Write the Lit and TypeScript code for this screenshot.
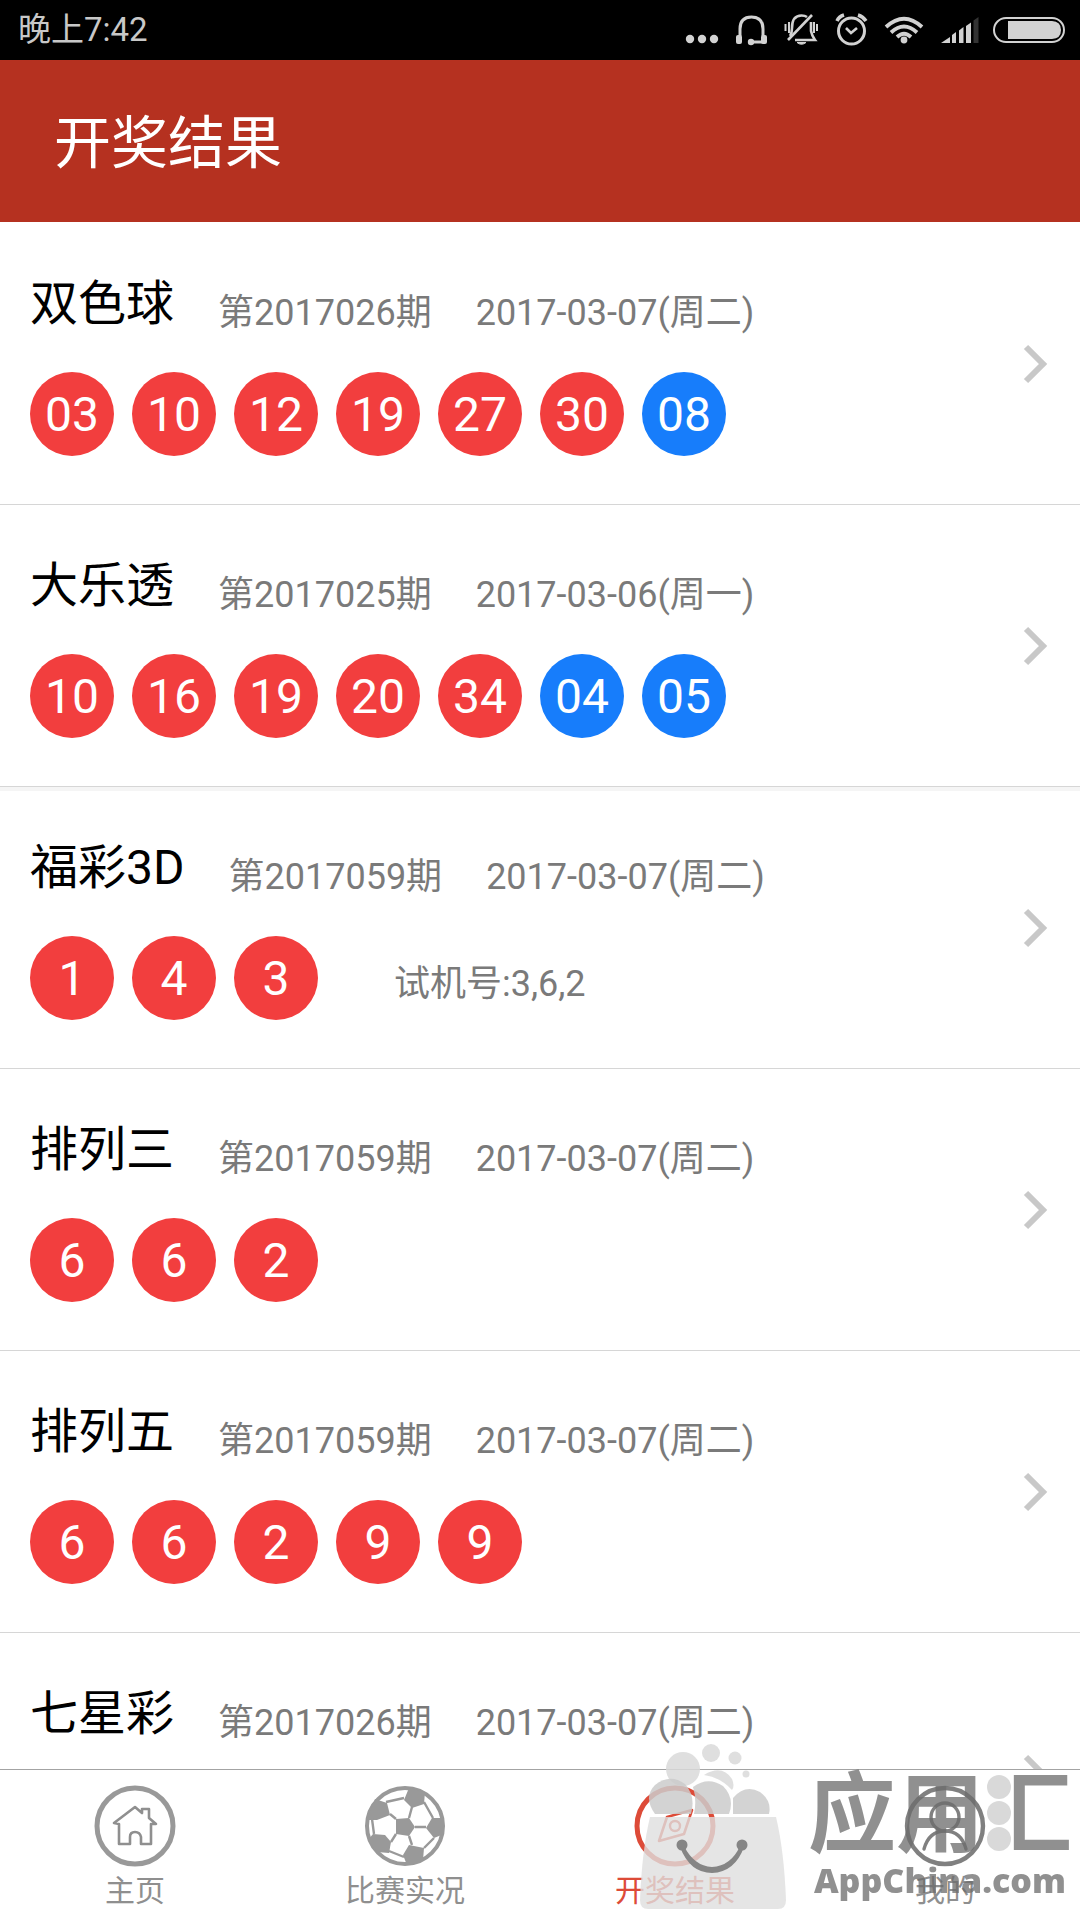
import { LitElement, html, css, svg } from "lit";
import { customElement } from "lit/decorators.js";
import { classMap } from "lit/directives/class-map.js";

interface Draw {
  name: string;
  issue: string;
  date: string;
  red: string[];
  blue?: string[];
  note?: string;
  banded?: boolean;
}

const DRAWS: Draw[] = [
  { name: "双色球", issue: "第2017026期", date: "2017-03-07(周二)", red: ["03", "10", "12", "19", "27", "30"], blue: ["08"] },
  { name: "大乐透", issue: "第2017025期", date: "2017-03-06(周一)", red: ["10", "16", "19", "20", "34"], blue: ["04", "05"] },
  { name: "福彩3D", issue: "第2017059期", date: "2017-03-07(周二)", red: ["1", "4", "3"], note: "试机号:3,6,2", banded: true },
  { name: "排列三", issue: "第2017059期", date: "2017-03-07(周二)", red: ["6", "6", "2"] },
  { name: "排列五", issue: "第2017059期", date: "2017-03-07(周二)", red: ["6", "6", "2", "9", "9"] },
  { name: "七星彩", issue: "第2017026期", date: "2017-03-07(周二)", red: [] },
];

const homeIcon = svg`
  <circle cx="41" cy="41" r="38" fill="none" stroke="#999" stroke-width="5"/>
  <path d="M20 38 L41 22 L48 28 V24 H55 V33 L62 39 H57 V59 H47 V52 Q46 47 41 47 Q36 47 36 52 V59 H25 V39 Z"
    fill="none" stroke="#8f8f8f" stroke-width="2.6" stroke-linejoin="round"/>`;

const ballIcon = svg`
  <circle cx="41" cy="41" r="38" fill="#fff" stroke="#999" stroke-width="4"/>
  <g fill="#999">
    <path d="M32 34 L45 33 L51 42 L45 51 L32 49 Z"/>
    <path d="M40 15 L45 3 L61 7 L60 19 L48 23 Z"/>
    <path d="M11 14 L23 18 L26 30 L13 35 L3 35 Z"/>
    <path d="M62 43 L68 33 L80 33 L80 49 L70 53 Z"/>
    <path d="M9 49 L21 50 L27 57 L25 68 L13 67 L4 55 Z"/>
    <path d="M45 60 L60 63 L59 75 L43 80 L39 70 Z"/>
  </g>
  <g fill="none" stroke="#999" stroke-width="2.4">
    <path d="M45 33 L48 22 M51 42 H62 M45 51 L48 60 M32 49 L27 57 M32 34 L26 29 M60 17 L69 33 M60 63 L70 53 M25 66 L40 72 M8 34 L10 49 M22 17 L40 13"/>
  </g>`;

const compassIcon = svg`
  <circle cx="41" cy="41" r="38" fill="none" stroke="#dd4b38" stroke-width="5"/>
  <path d="M33 32 L58 25 L50 49 L25 56 Z" fill="none" stroke="#dd4b38" stroke-width="2.6" stroke-linejoin="round"/>
  <circle cx="41" cy="41" r="5" fill="none" stroke="#dd4b38" stroke-width="2.4"/>`;

const userIcon = svg`
  <circle cx="41" cy="41" r="38" fill="none" stroke="#808080" stroke-width="4.4"/>
  <circle cx="41" cy="32" r="14" fill="none" stroke="#808080" stroke-width="3.4"/>
  <path d="M20 64 Q25 46 41 46 Q57 46 62 64" fill="none" stroke="#808080" stroke-width="3.4" stroke-linecap="round"/>`;

const TABS = [
  { label: "主页", icon: homeIcon },
  { label: "比赛实况", icon: ballIcon },
  { label: "开奖结果", icon: compassIcon, active: true },
  { label: "我的", icon: userIcon },
];

@customElement("status-bar")
class StatusBar extends LitElement {
  static styles = css`
    :host {
      display: flex;
      justify-content: space-between;
      align-items: center;
      height: 60px;
      padding: 0 14px 0 18px;
      background: #000;
      color: #c8c8c8;
      font-size: 33px;
      line-height: 60px;
    }
    svg { display: block; }
  `;

  render() {
    return html`
      <span>晚上7:42</span>
      <svg width="382" height="60" viewBox="684 0 382 60" fill="none" stroke="#d2d2d2" stroke-width="3" aria-hidden="true">
        <g fill="#d2d2d2" stroke="none">
          <circle cx="690" cy="39" r="4.2"/><circle cx="702" cy="39" r="4.2"/><circle cx="714" cy="39" r="4.2"/>
        </g>
        <path d="M740 36 V29 Q740 17 751.5 17 Q763 17 763 29 V36"/>
        <path d="M751 42 H763"/>
        <g fill="#d2d2d2" stroke="none">
          <rect x="736" y="35" width="6" height="9" rx="2"/><rect x="761" y="35" width="6" height="9" rx="2"/>
          <circle cx="751" cy="42" r="3.2"/>
        </g>
        <path d="M790 36 Q792 33 792 28 Q792 15.5 801.5 15.5 Q805 15.5 807 17 M811 22 V31 Q812 36 815 40 H795" stroke-width="2.6"/>
        <path d="M788 40 L812 15" stroke-width="2.6"/>
        <path d="M797 42.5 H806 Q801.5 46 797 42.5 Z" fill="#d2d2d2" stroke-width="1"/>
        <path d="M785.5 24 V31 M789 22 V33 M814 22 V33 M817 24 V31" stroke-width="2"/>
        <circle cx="851.5" cy="31" r="13"/>
        <path d="M846 28 L851 33 L857 28" stroke-width="2.6"/>
        <path d="M837 21 Q839 16.5 844 15 M858 15 Q863 16.5 866 21" stroke-width="3.6"/>
        <path d="M886 27 Q904 10.5 922 27 M891 32.5 Q904 20.5 917 32.5 M897 37 Q904 30.5 911 37" stroke-width="3.8"/>
        <circle cx="904" cy="40" r="3.4" fill="#d2d2d2" stroke="none"/>
        <g fill="#d2d2d2" stroke="none">
          <path d="M941 43 L950 37 V43 Z"/><path d="M952 43 V35 L956 32 V43 Z"/><path d="M959 43 V30.5 L963.5 27 V43 Z"/><path d="M966 43 V26 L971 22.5 V43 Z"/>
          <path d="M973.5 43 V20.5 L978.5 17 V43 Z" fill="#333"/>
        </g>
        <rect x="994" y="18" width="70" height="24" rx="12" stroke-width="2"/>
        <path d="M1008 21 H1052 Q1061 21.5 1061 30 Q1061 38.5 1052 39 H1008 Z" fill="#d2d2d2" stroke="none"/>
      </svg>
    `;
  }
}

@customElement("app-root")
class AppRoot extends LitElement {
  static styles = css`
    :host {
      display: flex;
      flex-direction: column;
      position: relative;
      height: 100vh;
      overflow: hidden;
      background: #fff;
      font-family: Roboto, "Noto Sans CJK SC", sans-serif;
    }
    .top {
      flex: none;
      padding: 43px 54px 37px;
      background: #b53120;
      color: #fff;
    }
    .title {
      margin: 0;
      font-size: 57px;
      line-height: 82px;
      font-weight: 400;
    }
    .list {
      flex: 1;
      min-height: 0;
      margin: 0;
      padding: 1px 0 0;
      overflow: hidden;
      list-style: none;
    }
    .row {
      display: flex;
      align-items: center;
      justify-content: space-between;
      height: 282px;
      padding: 0 30px;
      box-sizing: border-box;
      border-bottom: 1px solid #d6d6d6;
      color: inherit;
      text-decoration: none;
    }
    .banded { box-shadow: inset 0 4px 0 #f5f5f5; }
    .info {
      display: flex;
      flex-direction: column;
      gap: 32px;
      height: 191px;
    }
    .head {
      display: flex;
      align-items: flex-end;
      gap: 44px;
      height: 72px;
      color: #7a7a7a;
      font-size: 36px;
      line-height: 54px;
    }
    .name {
      margin: 0;
      color: #000;
      font-size: 48px;
      line-height: 72px;
      font-weight: 400;
    }
    .balls {
      display: flex;
      align-items: center;
      gap: 18px;
    }
    .ball {
      width: 84px;
      height: 84px;
      border-radius: 50%;
      background: #f23e3e;
      color: #fff;
      font-size: 48px;
      line-height: 86px;
      text-align: center;
    }
    .blue { background: #177dfb; }
    .note {
      margin-left: 58px;
      padding-top: 12px;
      color: #7a7a7a;
      font-size: 36px;
      line-height: 54px;
    }
    .chevron { display: block; flex: none; }
    .tabs {
      flex: none;
      display: grid;
      grid-template-columns: repeat(4, 1fr);
      border-top: 1px solid #a3a3a3;
      background: #fff;
    }
    .tab {
      display: flex;
      flex-direction: column;
      align-items: center;
      gap: 2px;
      padding: 15px 0 7px;
      border: 0;
      background: none;
      color: #8f8f8f;
      font-family: inherit;
      font-size: 30px;
      line-height: 44px;
    }
    .tab svg { display: block; }
    .active { color: #dd4b38; }
    .mark {
      position: absolute;
      right: 8px;
      bottom: 0;
      display: flex;
      align-items: flex-end;
      gap: 22px;
      pointer-events: none;
      color: #6c6c6c;
    }
    .bag { display: block; margin-bottom: 9px; }
    .words {
      position: relative;
      display: flex;
      flex-direction: column;
      align-items: center;
      font-weight: 700;
      opacity: 0.75;
    }
    .cn {
      font-size: 88px;
      line-height: 88px;
    }
    .last {
      color: transparent;
      background: linear-gradient(90deg, transparent 33%, #6c6c6c 33%);
      -webkit-background-clip: text;
      background-clip: text;
    }
    .dots {
      position: absolute;
      right: 60px;
      top: 3px;
    }
    .en {
      padding-bottom: 19px;
      font-family: "Open Sans", sans-serif;
      font-size: 34px;
      font-weight: 800;
      line-height: 42px;
    }
  `;

  private row(d: Draw) {
    return html`
      <li>
        <a class=${classMap({ row: true, banded: !!d.banded })} href="#">
          <div class="info">
            <div class="head">
              <h2 class="name">${d.name}</h2>
              <span>${d.issue}</span>
              <span>${d.date}</span>
            </div>
            <div class="balls">
              ${d.red.map((n) => html`<span class="ball">${n}</span>`)}
              ${(d.blue ?? []).map((n) => html`<span class="ball blue">${n}</span>`)}
              ${d.note ? html`<span class="note">${d.note}</span>` : null}
            </div>
          </div>
          <svg class="chevron" width="28" height="44" viewBox="0 0 28 44" aria-hidden="true">
            <path d="M4 5 L21 22 L4 39" fill="none" stroke="#c8c8c8" stroke-width="6"/>
          </svg>
        </a>
      </li>
    `;
  }

  render() {
    return html`
      <status-bar></status-bar>
      <header class="top"><h1 class="title">开奖结果</h1></header>
      <ul class="list">${DRAWS.map((d) => this.row(d))}</ul>
      <nav class="tabs">
        ${TABS.map(
          (t) => html`
            <button class=${classMap({ tab: true, active: !!t.active })}>
              <svg width="82" height="82" viewBox="0 0 82 82" aria-hidden="true">${t.icon}</svg>
              <span>${t.label}</span>
            </button>
          `
        )}
      </nav>
      <div class="mark">
        <svg class="bag" width="148" height="168" viewBox="638 1743 148 168" aria-hidden="true">
          <g fill="#d9d9d9" fill-opacity="0.85">
            <circle cx="683" cy="1769" r="17"/>
            <circle cx="711" cy="1753" r="9"/>
            <circle cx="735" cy="1758" r="6.5"/>
            <circle cx="746" cy="1774" r="3.5"/>
            <path d="M704 1775 Q722 1764 732 1779 Q735 1786 732 1790 Q720 1777 704 1775 Z"/>
          </g>
          <g fill="#cbcbcb" fill-opacity="0.85">
            <path d="M655 1814 Q643 1797 655 1785 Q670 1773 685 1784 Q696 1796 691 1814 Z"/>
            <path d="M694 1814 Q697 1800 693 1787 Q708 1776 723 1786 Q735 1798 729 1814 Z"/>
            <path d="M733 1814 V1798 Q745 1784 760 1792 Q772 1801 769 1814 Z"/>
          </g>
          <path d="M650 1817 H776 Q784 1850 786 1900 Q786 1909 778 1909 H648 Q640 1909 640 1900 Q642 1850 650 1817 Z" fill="#dfdfdf" fill-opacity="0.8"/>
          <g fill="#858585">
            <circle cx="682" cy="1845" r="5.5"/><circle cx="742" cy="1845" r="5.5"/>
            <path d="M680 1847 Q690 1873 712 1873 Q735 1872 744 1847 L740 1846 Q731 1866 712 1867 Q694 1866 684 1846 Z"/>
          </g>
        </svg>
        <div class="words">
          <svg class="dots" width="26" height="80" viewBox="0 0 26 80" fill="#cdcdcd" aria-hidden="true">
            <circle cx="13" cy="13" r="12"/><circle cx="13" cy="39" r="12"/><circle cx="13" cy="65" r="12"/>
          </svg>
          <span class="cn">应用<span class="last">汇</span></span>
          <span class="en">AppChina.com</span>
        </div>
      </div>
    `;
  }
}
